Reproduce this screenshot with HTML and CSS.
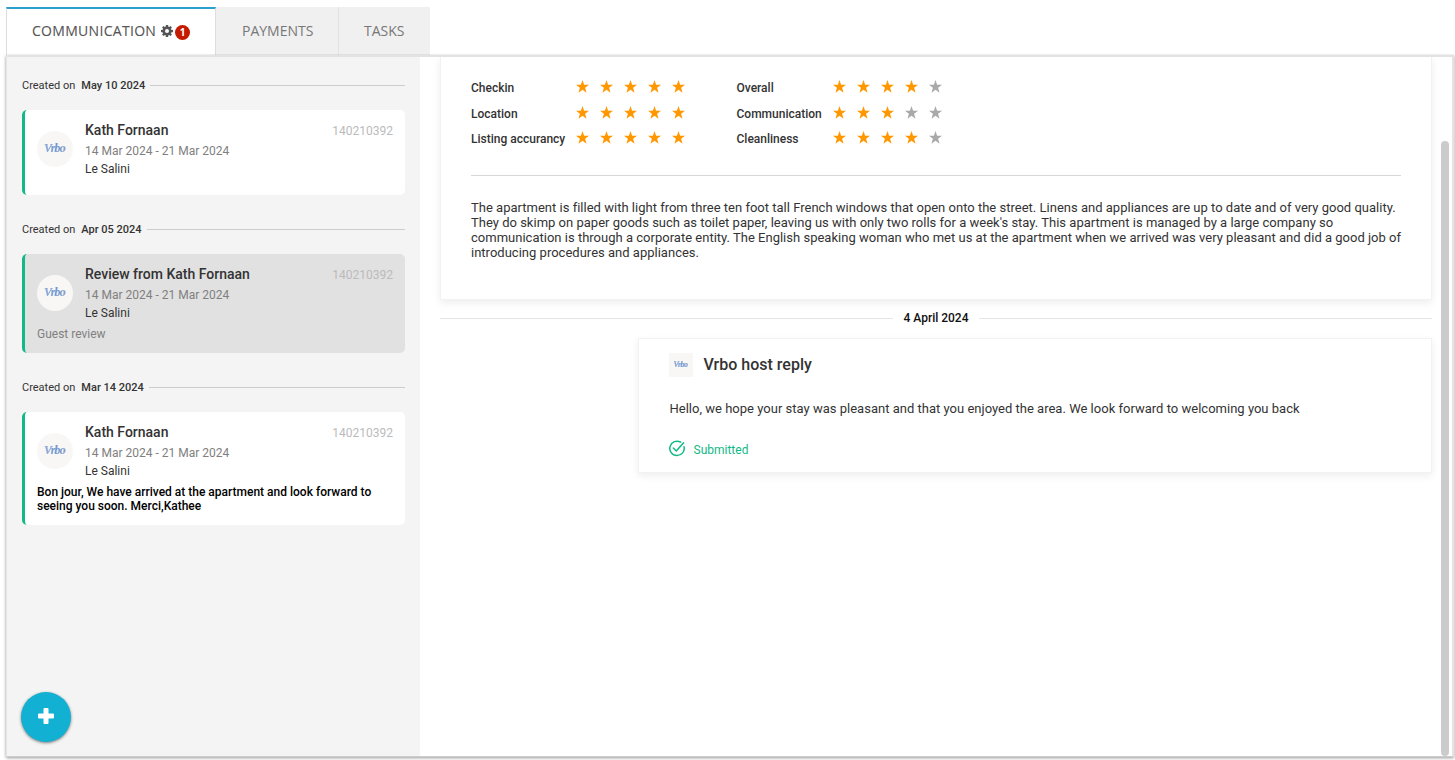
FILE: index.html
```
<!DOCTYPE html>
<html lang="en">
<head>
<meta charset="utf-8">
<title>Communication</title>
<link rel="stylesheet" href="styles.css">
</head>
<body>
<svg class="defs" width="0" height="0">
  <defs>
    <symbol id="star" viewBox="0 0 13 13"><path d="M6.5 0 8.100 4.700 13 4.800 9.100 7.800 10.500 12.700 6.500 9.800 2.500 12.700 3.900 7.800 0 4.800 4.900 4.700Z"/></symbol>
  </defs>
</svg>
<nav class="tabs">
  <a class="tab active"><span class="name">COMMUNICATION</span>
    <svg class="gear" viewBox="0 0 12 12" width="12" height="12"><path fill="#555" fill-rule="evenodd" d="M4.900 0h2.200l.3 1.700 .8.300L9.600 1.100 10.900 2.400 9.900 3.800l.4.900L12 4.900v2.200l-1.700.3-.4.900 1 1.300-1.300 1.300-1.400-1-.8.400L7.100 12H4.900l-.3-1.700-.8-.4-1.400 1-1.300-1.300 1-1.300-.4-.9L0 7.100V4.900l1.700-.2.4-.9-1-1.400L2.400 1.100l1.400.9.800-.3ZM6 4a2 2 0 1 0 0 4 2 2 0 0 0 0-4Z"/></svg><span class="badge">1</span></a>
  <a class="tab payments"><span class="name">PAYMENTS</span></a>
  <a class="tab tasks"><span class="name">TASKS</span></a>
</nav>
<main class="panel">
  <aside class="sidebar">
    <div class="created"><span>Created on</span><b>May 10 2024</b><i></i></div>
    <article class="card">
      <div class="top">
        <div class="avatar"><span class="logo">Vrbo</span></div>
        <div class="info"><h3>Kath Fornaan</h3><p class="dates">14 Mar 2024 - 21 Mar 2024</p><p class="place">Le Salini</p></div>
        <span class="number">140210392</span>
      </div>
    </article>
    <div class="created"><span>Created on</span><b>Apr 05 2024</b><i></i></div>
    <article class="card selected">
      <div class="top">
        <div class="avatar"><span class="logo">Vrbo</span></div>
        <div class="info"><h3>Review from Kath Fornaan</h3><p class="dates">14 Mar 2024 - 21 Mar 2024</p><p class="place">Le Salini</p></div>
        <span class="number">140210392</span>
      </div>
      <p class="note">Guest review</p>
    </article>
    <div class="created"><span>Created on</span><b>Mar 14 2024</b><i></i></div>
    <article class="card">
      <div class="top">
        <div class="avatar"><span class="logo">Vrbo</span></div>
        <div class="info"><h3>Kath Fornaan</h3><p class="dates">14 Mar 2024 - 21 Mar 2024</p><p class="place">Le Salini</p></div>
        <span class="number">140210392</span>
      </div>
      <p class="note unread">Bon jour, We have arrived at the apartment and look forward to<br>seeing you soon. Merci,Kathee</p>
    </article>
    <button class="add" aria-label="Add"><svg viewBox="0 0 16 16" width="16" height="16"><path fill="#fff" d="M6.500 0h3q1 0 1 1v4.500H15q1 0 1 1v3q0 1-1 1h-4.500V15q0 1-1 1h-3q-1 0-1-1v-4.500H1q-1 0-1-1v-3q0-1 1-1h4.500V1q0-1 1-1Z"/></svg></button>
  </aside>
  <section class="thread">
    <article class="review">
      <div class="ratings">
        <span>Checkin</span>
        <div class="stars"><svg><use href="#star"/></svg><svg><use href="#star"/></svg><svg><use href="#star"/></svg><svg><use href="#star"/></svg><svg><use href="#star"/></svg></div>
        <span>Overall</span>
        <div class="stars"><svg><use href="#star"/></svg><svg><use href="#star"/></svg><svg><use href="#star"/></svg><svg><use href="#star"/></svg><svg class="off"><use href="#star"/></svg></div>
        <span>Location</span>
        <div class="stars"><svg><use href="#star"/></svg><svg><use href="#star"/></svg><svg><use href="#star"/></svg><svg><use href="#star"/></svg><svg><use href="#star"/></svg></div>
        <span>Communication</span>
        <div class="stars"><svg><use href="#star"/></svg><svg><use href="#star"/></svg><svg><use href="#star"/></svg><svg class="off"><use href="#star"/></svg><svg class="off"><use href="#star"/></svg></div>
        <span>Listing accurancy</span>
        <div class="stars"><svg><use href="#star"/></svg><svg><use href="#star"/></svg><svg><use href="#star"/></svg><svg><use href="#star"/></svg><svg><use href="#star"/></svg></div>
        <span>Cleanliness</span>
        <div class="stars"><svg><use href="#star"/></svg><svg><use href="#star"/></svg><svg><use href="#star"/></svg><svg><use href="#star"/></svg><svg class="off"><use href="#star"/></svg></div>
      </div>
      <p class="body">The apartment is filled with light from three ten foot tall French windows that open onto the street. Linens and appliances are up to date and of very good quality.<br>They do skimp on paper goods such as toilet paper, leaving us with only two rolls for a week's stay. This apartment is managed by a large company so<br>communication is through a corporate entity. The English speaking woman who met us at the apartment when we arrived was very pleasant and did a good job of<br>introducing procedures and appliances.</p>
    </article>
    <div class="day"><span>4 April 2024</span></div>
    <article class="reply">
      <header><div class="thumb"><span class="logo small">Vrbo</span></div><h2>Vrbo host reply</h2></header>
      <p class="text">Hello, we hope your stay was pleasant and that you enjoyed the area. We look forward to welcoming you back</p>
      <div class="status"><svg viewBox="0 0 16 17" width="16" height="17" fill="none" stroke="#12b886" stroke-width="1.500" stroke-linecap="round" stroke-linejoin="round"><path d="M15 6.700A7.200 7.200 0 1 1 11.700 2.200"/><path d="M4.300 8 7.300 11 14.600 2.800"/></svg><span>Submitted</span></div>
    </article>
  </section>
  <div class="scroll"><div class="handle"></div></div>
</main>
</body>
</html>
```
FILE: styles.css
```
* { box-sizing: border-box; }
body { margin: 0; width: 1455px; height: 760px; overflow: hidden; background: #fff; font-family: Roboto, sans-serif; color: #333; }
h2, h3, p { margin: 0; }
.defs { display: block; }

.tabs { display: flex; height: 55px; padding: 7px 0 0 6px; font-family: "Open Sans", sans-serif; font-size: 14px; }
.tab { display: flex; align-items: center; height: 48px; padding-bottom: 2px; background: #f0f0f0; color: #777; }
.tab.active { width: 210px; padding-left: 25px; padding-bottom: 4px; background: #fff; color: #555; border-top: 2px solid #2ba0cd; border-left: 1px solid #ddd; border-right: 1px solid #ddd; }
.tab.active .name { width: 124px; white-space: nowrap; letter-spacing: .3px; -webkit-text-stroke: .1px #555; }
.tab.payments { width: 123px; padding-left: 26px; border-right: 1px solid #e2e2e2; }
.tab.tasks { width: 91px; padding-left: 25px; }
.gear { margin: 1px 0 0 5px; }
.badge { display: flex; align-items: center; justify-content: center; width: 15px; height: 15px; margin: 4px 0 0 2px; border-radius: 50%; background: #c41a00; color: #fff; font-size: 10px; font-weight: 700; line-height: 1; }

.panel { display: flex; width: 1448px; height: 702px; margin-left: 6px; border: 1px solid #e3e3e3; border-width: 2px 2px 1px 1px; border-bottom-color: #ccc; box-shadow: 0 1px 3px rgba(0,0,0,.4); clip-path: inset(-1px -1px -4px -4px); }

.sidebar { position: relative; width: 413px; padding: 20px 15px 0; background: #f4f4f4; }
.created { display: flex; align-items: center; height: 16px; margin-bottom: 17px; font-size: 11px; }
.created b { margin: 0 5px 0 6px; font-weight: 500; }
.created i { flex: 1; height: 1px; background: #ccc; }
.card { width: 383px; margin-bottom: 26px; padding: 10px 12px 12px; border-left: 3px solid #12b886; border-radius: 5px; background: #fff; }
.card.selected { background: #e1e1e1; }
.top { display: flex; height: 63px; }
.avatar { display: flex; align-items: center; justify-content: center; width: 36px; height: 36px; margin: 11px 12px 0 0; border-radius: 50%; background: #f8f7f6; }
.logo { font: italic 700 12px/12px "Liberation Serif", serif; letter-spacing: -.8px; background: linear-gradient(90deg, #9aaed8, #6d9ad4 50%, #8d9fc9); -webkit-background-clip: text; background-clip: text; color: transparent; padding-right: 1px; margin-bottom: 2px; -webkit-text-stroke: .15px #84a0d0; }
.logo.small { font-size: 8px; letter-spacing: -.5px; margin-bottom: 1px; }
.info { flex: 1; }
.info h3 { font-size: 14px; line-height: 20px; font-weight: 500; margin-bottom: 2px; }
.info p { font-size: 12px; line-height: 18px; }
.info .dates { color: #808080; }
.number { color: #bbb; font-size: 12px; line-height: 22px; }
.note { font-size: 12px; line-height: 14px; color: #808080; }
.note.unread { color: #000; font-weight: 500; white-space: nowrap; }
.add { position: absolute; left: 14px; bottom: 14px; display: flex; align-items: center; justify-content: center; width: 50px; height: 50px; padding: 0 0 2px; border: 0; border-radius: 50%; background: #12b0d2; box-shadow: 0 1px 3px rgba(0,0,0,.5); }

.thread { width: 1012px; padding-left: 20px; background: #fff; }
.thread article { border: 1px solid #f2f2f2; background: #fff; box-shadow: 0 3px 8px rgba(0,0,0,.07); }
.thread .review { height: 243px; padding: 18px 30px 0; border-top: 0; clip-path: inset(0 -10px -14px -10px); }
.ratings { display: grid; grid-template-columns: 105px 160.500px 96px 120px; grid-template-rows: 26px 25px 25px; align-items: center; height: 101px; border-bottom: 1px solid #d8d8d8; font-size: 12px; font-weight: 500; line-height: 16px; }
.ratings > :nth-child(n+5):nth-child(-n+8) { margin-top: 1px; }
.ratings > .stars { margin-bottom: 3px; }
.stars { display: flex; gap: 11px; }
.stars svg { width: 13px; height: 13px; fill: #ff9800; }
.stars svg.off { fill: #a9a9a9; }
.body { margin-top: 24px; font-size: 13px; line-height: 15px; letter-spacing: .01px; white-space: nowrap; }
.day { display: flex; align-items: center; gap: 10px; height: 16px; margin: 10px 0 12px; font-size: 12px; font-weight: 500; color: #111; }
.day::before, .day::after { content: ""; flex: 1; height: 1px; background: #e4e4e4; }
.reply { width: 794px; height: 135px; margin-left: 198px; padding: 14px 30px 0; }
.reply header { display: flex; align-items: center; height: 24px; gap: 10.500px; }
.thumb { display: flex; align-items: center; justify-content: center; width: 24px; height: 24px; background: #f8f7f6; }
.reply h2 { font-size: 16px; line-height: 24px; font-weight: 500; }
.text { margin-top: 24px; padding-left: .5px; font-size: 13px; line-height: 16px; letter-spacing: .01px; white-space: nowrap; }
.status { display: flex; align-items: center; gap: 8.500px; margin-top: 23px; font-size: 12px; color: #12b886; height: 18px; }
.status svg { margin-bottom: 1px; }
.status span { line-height: 14px; margin-top: 1px; }

.scroll { display: flex; flex-direction: column; justify-content: flex-end; width: 19px; padding-left: 9px; }
.handle { width: 8px; height: 615px; border-radius: 4px; background: #cbcbcb; }
```
